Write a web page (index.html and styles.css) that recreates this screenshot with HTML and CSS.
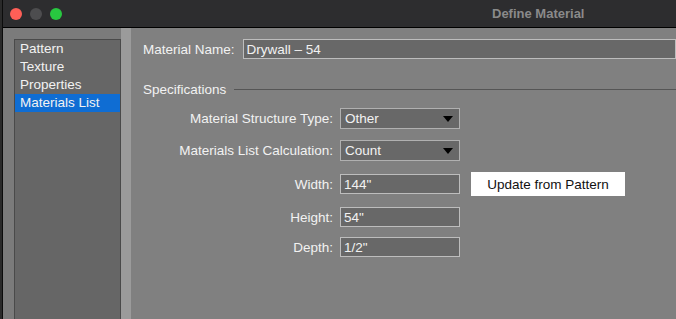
FILE: index.html
```html
<!DOCTYPE html>
<html lang="en">
<head>
    <meta charset="UTF-8">
    <title>Define Material</title>
    <link rel="stylesheet" href="styles.css">
</head>
<body>
    <div class="window">
        <div class="titlebar">
            <div class="lights">
                <span class="light red"></span>
                <span class="light gray"></span>
                <span class="light green"></span>
            </div>
            <div class="title">Define Material</div>
        </div>
        <div class="content">
            <div class="sidebar">
                <ul class="nav-list">
                    <li>Pattern</li>
                    <li>Texture</li>
                    <li>Properties</li>
                    <li class="selected">Materials List</li>
                </ul>
            </div>
            <div class="splitter"></div>
            <div class="main">
                <div class="name-row">
                    <label for="materialName">Material Name:</label>
                    <input type="text" id="materialName" class="name-input" value="Drywall – 54">
                </div>
                <div class="section-head">
                    <span>Specifications</span>
                    <div class="rule"></div>
                </div>
                <div class="form-row row-1">
                    <label>Material Structure Type:</label>
                    <div class="select"><span>Other</span></div>
                </div>
                <div class="form-row row-2">
                    <label>Materials List Calculation:</label>
                    <div class="select"><span>Count</span></div>
                </div>
                <div class="form-row row-3">
                    <label for="widthInput">Width:</label>
                    <input type="text" id="widthInput" class="field" value="144&quot;">
                    <button class="update-btn">Update from Pattern</button>
                </div>
                <div class="form-row row-4">
                    <label for="heightInput">Height:</label>
                    <input type="text" id="heightInput" class="field" value="54&quot;">
                </div>
                <div class="form-row row-5">
                    <label for="depthInput">Depth:</label>
                    <input type="text" id="depthInput" class="field" value="1/2&quot;">
                </div>
            </div>
        </div>
    </div>
</body>
</html>
```

FILE: styles.css
```css
body {
    margin: 0;
    width: 676px;
    height: 319px;
    overflow: hidden;
    background-color: #2a2a2a;
    font-family: "Liberation Sans", Arial, sans-serif;
    font-size: 13.5px;
    color: #f2f2f2;
}
.window {
    margin-left: 2px;
    height: 100%;
    border-left: 1px solid #0c0c0c;
    display: flex;
    flex-direction: column;
}
.titlebar {
    height: 27px;
    flex: none;
    background-color: #2d2d2f;
    border-bottom: 1px solid #000;
    display: flex;
    align-items: center;
}
.lights {
    display: flex;
    gap: 8px;
    margin-left: 7px;
}
.light {
    width: 12px;
    height: 12px;
    border-radius: 50%;
}
.red {
    background-color: #fe5f57;
}
.gray {
    background-color: #4d4d4f;
}
.green {
    background-color: #28c840;
}
.title {
    margin-left: 430px;
    font-weight: bold;
    color: #8a8a8a;
    font-size: 13px;
}
.content {
    flex: 1;
    display: flex;
    background-color: #7b7b7b;
}
.sidebar {
    width: 118px;
    padding: 11px 0 0 11px;
    box-sizing: border-box;
    display: flex;
}
.nav-list {
    list-style-type: none;
    margin: 0;
    padding: 0;
    flex: 1;
    background-color: #666;
    border: 1px solid #4a4a4a;
    border-bottom: none;
}
.nav-list li {
    height: 18px;
    line-height: 18px;
    padding-left: 5px;
}
.nav-list li.selected {
    background-color: #0f6dd3;
}
.splitter {
    width: 10px;
    background-color: #9b9b9b;
}
.main {
    flex: 1;
    background-color: #808080;
    padding: 11px 0 0 12px;
    min-width: 0;
}
.name-row {
    display: flex;
    align-items: center;
}
.name-row label {
    margin-right: 8px;
}
.name-input {
    flex: 1;
    height: 20px;
}
input {
    box-sizing: border-box;
    background-color: #686868;
    border: 1px solid #bdbdbd;
    color: #f2f2f2;
    font-family: inherit;
    font-size: 13.5px;
    padding: 0 3px;
    margin: 0;
    outline: none;
}
.section-head {
    display: flex;
    align-items: center;
    margin-top: 21px;
    height: 18px;
}
.section-head .rule {
    flex: 1;
    height: 1px;
    background-color: #555;
    margin-left: 8px;
}
.form-row {
    display: flex;
    align-items: center;
}
.form-row label {
    width: 190px;
    text-align: right;
    margin-right: 7px;
}
.row-1 {
    margin-top: 10px;
    height: 21px;
}
.row-2 {
    margin-top: 11px;
    height: 21px;
}
.row-3 {
    margin-top: 11px;
    height: 24px;
}
.row-4 {
    margin-top: 11px;
    height: 20px;
}
.row-5 {
    margin-top: 10px;
    height: 20px;
}
.select {
    width: 120px;
    height: 21px;
    box-sizing: border-box;
    background-color: #686868;
    border: 1px solid #b0b0b0;
    padding-left: 4px;
    display: flex;
    align-items: center;
    position: relative;
}
.select::after {
    content: "";
    position: absolute;
    right: 6px;
    top: 7px;
    border-left: 5px solid transparent;
    border-right: 5px solid transparent;
    border-top: 6px solid #000;
}
.field {
    width: 120px;
    height: 20px;
}
.update-btn {
    margin-left: 11px;
    width: 154px;
    height: 24px;
    background-color: #fff;
    border: none;
    color: #111;
    font-family: inherit;
    font-size: 13.5px;
    padding: 0;
}
```
